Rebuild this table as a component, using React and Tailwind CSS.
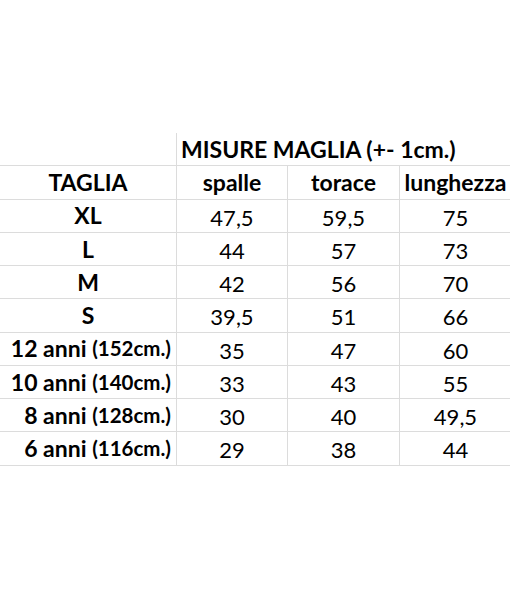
import React from 'react';

const rows = [
  { size: 'XL', values: ['47,5', '59,5', '75'] },
  { size: 'L', values: ['44', '57', '73'] },
  { size: 'M', values: ['42', '56', '70'] },
  { size: 'S', values: ['39,5', '51', '66'] },
  { size: '12 anni', note: '(152cm.)', values: ['35', '47', '60'] },
  { size: '10 anni', note: '(140cm.)', values: ['33', '43', '55'] },
  { size: '8 anni', note: '(128cm.)', values: ['30', '40', '49,5'] },
  { size: '6 anni', note: '(116cm.)', values: ['29', '38', '44'] },
];

const cell = 'flex items-center justify-center border-b border-r border-[#dcdcdc] h-[33.25px]';

export default function App() {
  return (
    <div className="w-[510px] h-[600px] overflow-hidden bg-white text-black font-['Lato',sans-serif] text-[22px]">
      <div className="w-[512px] pt-[133px] grid grid-cols-[177px_111px_112px_112px]">
        {/* title row */}
        <div className="h-[33.25px] border-b border-r border-[#dcdcdc]" />
        <div className="col-span-3 h-[33.25px] border-b border-[#dcdcdc] flex items-center pl-[4px] font-bold text-[23px] whitespace-nowrap">
          MISURE MAGLIA (+- 1cm.)
        </div>

        {/* header row */}
        <div className={`${cell} font-bold text-[23px]`}>TAGLIA</div>
        <div className={`${cell} font-bold text-[23px]`}>spalle</div>
        <div className={`${cell} font-bold text-[23px]`}>torace</div>
        <div className={`${cell} font-bold text-[23px]`}>lunghezza</div>

        {rows.map((r) => (
          <React.Fragment key={r.size}>
            {r.note ? (
              <div className="flex items-center justify-end pr-[5px] border-b border-r border-[#dcdcdc] h-[33.25px] font-bold text-[23px] whitespace-nowrap">
                {r.size}&nbsp;<span className="text-[20.5px]">{r.note}</span>
              </div>
            ) : (
              <div className={`${cell} font-bold text-[23px]`}>{r.size}</div>
            )}
            {r.values.map((v, i) => (
              <div key={i} className={`${cell} pt-[3px]`}>{v}</div>
            ))}
          </React.Fragment>
        ))}
      </div>
    </div>
  );
}
